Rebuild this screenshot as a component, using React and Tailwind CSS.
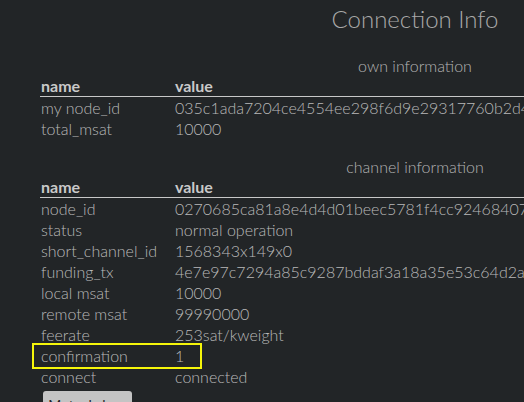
import React from 'react';

const ownInfo = [
  ['my node_id', '035c1ada7204ce4554ee298f6d9e29317760b2d4a0e4c5b3f1d2e8a7c6b9d0f1e2'],
  ['total_msat', '10000'],
];

const channelInfo = [
  ['node_id', '0270685ca81a8e4d4d01beec5781f4cc924684072b3c1d5e6f7a8b9c0d1e2f3a4b'],
  ['status', 'normal operation'],
  ['short_channel_id', '1568343x149x0'],
  ['funding_tx', '4e7e97c7294a85c9287bddaf3a18a35e53c64d2a1b0c9d8e7f6a5b4c3d2e1f0a'],
  ['local msat', '10000'],
  ['remote msat', '99990000'],
  ['feerate', '253sat/kweight'],
  ['confirmation', '1'],
  ['connect', 'connected'],
];

function InfoTable({ caption, rows, highlight }) {
  return (
    <div>
      <p className="text-center text-[16px] font-light leading-[20px] text-[#b4b4b4]">{caption}</p>
      <div className="grid grid-cols-[135px_1fr] border-b border-[#c8c8c8] text-[16px] font-bold leading-[20px] text-[#c9c9c9]">
        <span className="pl-[1px]">name</span>
        <span>value</span>
      </div>
      {rows.map(([name, value]) => (
        <div
          key={name}
          className="relative grid grid-cols-[135px_1fr] text-[16px] font-light leading-[21px] whitespace-nowrap text-[#b9b9b9]"
        >
          <span className="pl-[1px]">{name}</span>
          <span>{value}</span>
          {highlight === name && (
            <div className="absolute -left-[8px] -top-[2px] h-[26px] w-[170px] border-2 border-[#f5f50a]" />
          )}
        </div>
      ))}
    </div>
  );
}

export default function App() {
  return (
    <div className="h-[402px] w-[524px] overflow-hidden bg-[#222527] font-['Lato',sans-serif]">
      <div className="w-[830px] px-10">
        <h1 className="pt-[3px] text-center text-[24px] font-light leading-[32px] text-[#a9a9a9]">
          Connection Info
        </h1>
        <div className="mt-[21px]">
          <InfoTable caption="own information" rows={ownInfo} />
        </div>
        <div className="mt-[18px]">
          <InfoTable caption="channel information" rows={channelInfo} highlight="confirmation" />
        </div>
        <button className="ml-[3px] mt-[4px] w-[89px] rounded-[3px] bg-[#c4c4c4] text-center text-[14px] leading-[28px] text-[#222]">
          Mutual close
        </button>
      </div>
    </div>
  );
}
